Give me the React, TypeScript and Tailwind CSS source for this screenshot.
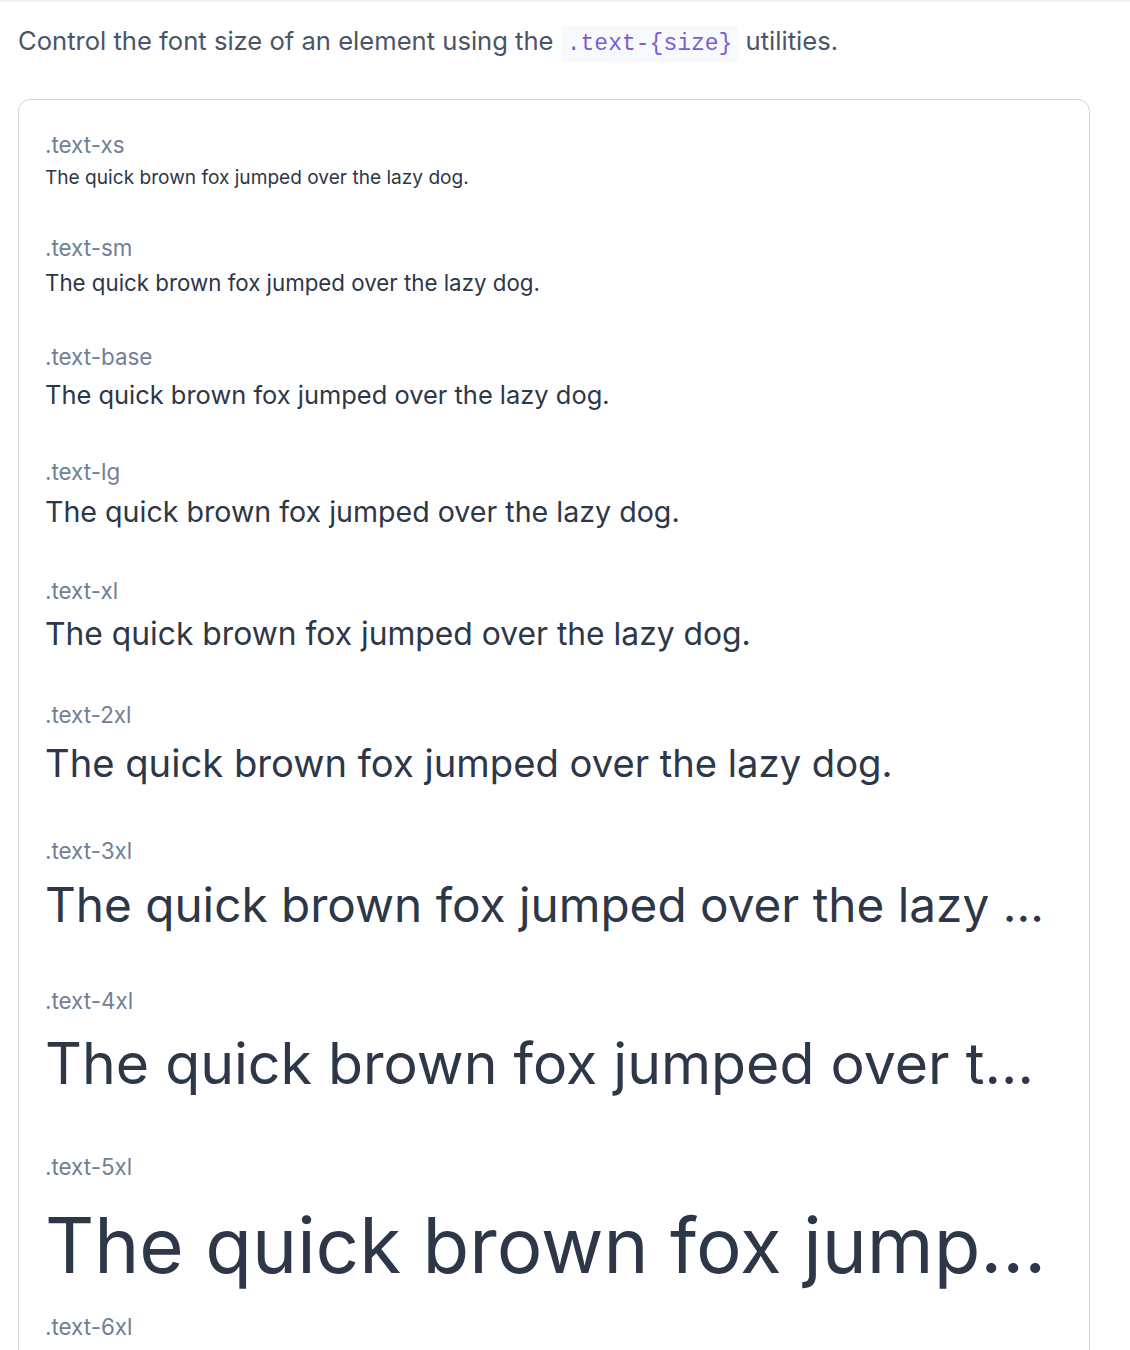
import React from "react";

type Item = { name: string; sample: string; gap: string };

const items: Item[] = [
  { name: ".text-xs", sample: "text-[19.1px] leading-[32px]", gap: "mb-[39px]" },
  { name: ".text-sm", sample: "text-[22.3px] leading-[38px]", gap: "mb-[39px]" },
  { name: ".text-base", sample: "text-[25.45px] leading-[44px]", gap: "mb-[39px]" },
  { name: ".text-lg", sample: "text-[28.6px] leading-[47px]", gap: "mb-[40px]" },
  { name: ".text-xl", sample: "text-[31.8px] leading-[53px]", gap: "mb-[39px]" },
  { name: ".text-2xl", sample: "text-[38.2px] leading-[64px]", gap: "mb-[40px]" },
  { name: ".text-3xl", sample: "text-[47.7px] leading-[77px]", gap: "mb-[41px]" },
  { name: ".text-4xl", sample: "text-[57.2px] leading-[94px]", gap: "mb-[40px]" },
  { name: ".text-5xl", sample: "text-[76.3px] leading-[124px]", gap: "mb-[4px]" },
];

export default function App() {
  return (
    <div className="min-h-[1350px] bg-white border-t-2 border-[#eef2f7] font-[family-name:'Inter',sans-serif] overflow-hidden">
      <p className="mt-[20px] ml-[18px] text-[25.6px] leading-[38px] text-[#4a5568]">
        Control the font size of an element using the{" "}
        <code className="font-[family-name:'Liberation_Mono',monospace] text-[23px] leading-none text-[#805ad5] bg-[#f7fafc] rounded-[4px] px-[6px] py-[5px]">
          .text-{"{size}"}
        </code>{" "}
        utilities.
      </p>
      <div className="mt-[39px] ml-[18px] w-[1072px] border border-[#cbd5e0] rounded-[12px] px-[26px] pt-[29px] pb-[40px]">
        {items.map((it) => (
          <div key={it.name} className={it.gap}>
            <div className="text-[22.4px] leading-[32px] text-[#718096]">{it.name}</div>
            <div className={`${it.sample} text-[#2d3748] truncate`}>
              The quick brown fox jumped over the lazy dog.
            </div>
          </div>
        ))}
        <div>
          <div className="text-[22.4px] leading-[32px] text-[#718096]">.text-6xl</div>
          <div className="text-[95.4px] leading-[150px] text-[#2d3748] truncate">
            The quick brown fox jumped over the lazy dog.
          </div>
        </div>
      </div>
    </div>
  );
}
